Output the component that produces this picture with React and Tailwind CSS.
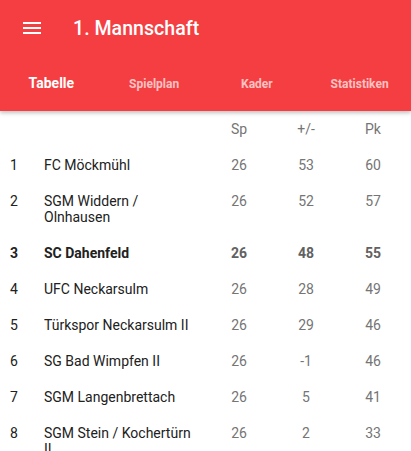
import React from "react";

const rows = [
  { r: 1, n: "FC Möckmühl", sp: 26, d: 53, p: 60 },
  { r: 2, n: "SGM Widdern / Olnhausen", sp: 26, d: 52, p: 57 },
  { r: 3, n: "SC Dahenfeld", sp: 26, d: 48, p: 55, bold: true },
  { r: 4, n: "UFC Neckarsulm", sp: 26, d: 28, p: 49 },
  { r: 5, n: "Türkspor Neckarsulm II", sp: 26, d: 29, p: 46 },
  { r: 6, n: "SG Bad Wimpfen II", sp: 26, d: -1, p: 46 },
  { r: 7, n: "SGM Langenbrettach", sp: 26, d: 5, p: 41 },
  { r: 8, n: "SGM Stein / Kochertürn II", sp: 26, d: 2, p: 33 },
];

export default function App() {
  return (
    <div className="w-[411px] h-[451px] overflow-hidden bg-white" style={{ fontFamily: "Roboto, 'Noto Sans', sans-serif" }}>
      <div className="bg-[#f53e41] h-[111px] relative z-10 shadow-[0_2px_4px_rgba(0,0,0,0.25)]">
        <div className="flex items-center h-[56px] pl-[23px]">
          <svg width="18" height="14" viewBox="0 0 18 14" className="mt-[-1px]">
            <rect x="0" y="1" width="18" height="2" fill="white" />
            <rect x="0" y="6" width="18" height="2" fill="white" />
            <rect x="0" y="11" width="18" height="2" fill="white" />
          </svg>
          <div className="ml-[32px] mt-[1px] text-white text-[19.6px] font-medium leading-none">1. Mannschaft</div>
        </div>
        <div className="grid grid-cols-4 h-[55px] items-center">
          <div className="text-center text-white text-[14px] font-bold">Tabelle</div>
          <div className="text-center text-white/70 text-[12px] font-bold">Spielplan</div>
          <div className="text-center text-white/70 text-[12px] font-bold">Kader</div>
          <div className="text-center text-white/70 text-[12px] font-bold">Statistiken</div>
        </div>
      </div>
      <div className="text-[14px] leading-[16px]">
        <div className="flex h-[36px] items-center text-[#757575]">
          <div className="w-[214px]" />
          <div className="w-[50px] text-center">Sp</div>
          <div className="w-[84px] text-center">+/-</div>
          <div className="w-[50px] text-center">Pk</div>
        </div>
        {rows.map((row) => (
          <div key={row.r} className={`flex items-start pt-[10px] pb-[10px] ${row.bold ? "font-bold" : ""}`}>
            <div className="w-[44px] pl-[10px] text-[#212121]">{row.r}</div>
            <div className="w-[170px] pr-[18px] text-[#212121]">{row.n}</div>
            <div className={`w-[50px] text-center ${row.bold ? "text-[#616161]" : "text-[#757575]"}`}>{row.sp}</div>
            <div className={`w-[84px] text-center ${row.bold ? "text-[#616161]" : "text-[#757575]"}`}>{row.d}</div>
            <div className={`w-[50px] text-center ${row.bold ? "text-[#616161]" : "text-[#757575]"}`}>{row.p}</div>
          </div>
        ))}
      </div>
    </div>
  );
}
